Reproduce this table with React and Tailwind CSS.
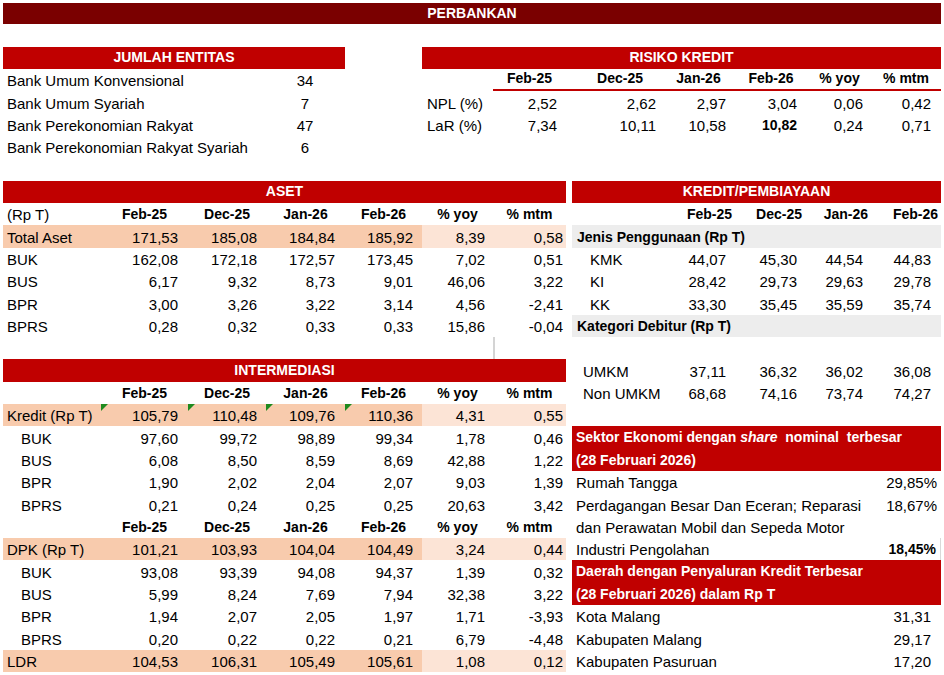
import React from "react";

const RH = "h-[22.33px]";
const ASET_COLS = "grid grid-cols-[98px_87px_78px_79px_77px_71px_73px] h-[22.33px]";
const KRED_COLS = "grid grid-cols-[100px_68px_66px_67px_68px] h-[22.33px]";
const RISK_COLS = "grid grid-cols-[71px_73px_102px_61px_84px_53px_75px] h-[22.33px]";

const ASET_PADS = ["pr-[10px]", "pr-[9px]", "pr-[10px]", "pr-[9px]", "pr-[8px]", "pr-[3px]"];
const KRED_VPADS = ["pr-[14px]", "pr-[9px]", "pr-[10px]", "pr-[10px]"];
const KRED_HPADS = ["pr-[8px]", "pr-[4px]", "pr-[5px]", "pr-[3px]"];
const RISK_VPADS = ["pr-[9px]", "pr-[12px]", "pr-[3px]", "pr-[16px]", "pr-[3px]", "pr-[10px]"];

const DARK = "bg-[#F8CBAD]";
const LIGHT = "bg-[#FCE4D6]";

function Cell({ className = "", children }) {
  return <div className={"flex items-end pb-[2px] leading-[17px] whitespace-nowrap " + className}>{children}</div>;
}

function RedBar({ children, className = "" }) {
  return (
    <div className={"flex items-center justify-center bg-[#C00000] text-white font-bold text-[14px] leading-[17px] " + RH + " " + className}>
      {children}
    </div>
  );
}

function Tri() {
  return (
    <svg className="absolute left-0 top-0" width="7" height="7" viewBox="0 0 7 7">
      <polygon points="0,0 7,0 0,7" fill="#1f8a1f" />
    </svg>
  );
}

function AsetHeader({ first = "" }) {
  const hs = ["Feb-25", "Dec-25", "Jan-26", "Feb-26", "% yoy", "% mtm"];
  return (
    <div className={ASET_COLS}>
      <Cell className="pl-[4px]">{first}</Cell>
      {hs.map((h) => (
        <Cell key={h} className="justify-center font-bold text-[14px]">{h}</Cell>
      ))}
    </div>
  );
}

function AsetRow({ label, vals, indent = false, hl = false, tri = false }) {
  return (
    <div className={ASET_COLS}>
      <Cell className={(indent ? "pl-[18px] " : "pl-[4px] ") + (hl ? DARK : "")}>{label}</Cell>
      {vals.map((v, i) => (
        <Cell
          key={i}
          className={"relative justify-end " + ASET_PADS[i] + " " + (hl ? (i < 4 ? DARK : LIGHT) : "")}
        >
          {tri && i < 4 ? <Tri /> : null}
          {v}
        </Cell>
      ))}
    </div>
  );
}

function KredRow({ label, vals, pl }) {
  return (
    <div className={KRED_COLS}>
      <Cell className={pl}>{label}</Cell>
      {vals.map((v, i) => (
        <Cell key={i} className={"justify-end " + KRED_VPADS[i]}>{v}</Cell>
      ))}
    </div>
  );
}

function RiskRow({ label, vals, boldIdx = -1 }) {
  return (
    <div className={RISK_COLS}>
      <Cell className="pl-[5px]">{label}</Cell>
      {vals.map((v, i) => (
        <Cell key={i} className={"justify-end " + RISK_VPADS[i] + (i === boldIdx ? " font-bold text-[14px]" : "")}>{v}</Cell>
      ))}
    </div>
  );
}

function Empty() {
  return <div className={RH} />;
}

export default function App() {
  return (
    <div className="w-[944px] h-[675px] bg-white text-black text-[15px] font-['Liberation_Sans',Arial,sans-serif] pt-[2px] pl-[3px] overflow-hidden">
      {/* Title */}
      <div className={RH + " w-[938px] pt-[1px]"}>
        <div className="h-full bg-[#7A0000] text-white font-bold text-[14px] flex items-center justify-center leading-[17px]">
          PERBANKAN
        </div>
      </div>
      <Empty />

      {/* Top section */}
      <div className="flex">
        <div className="w-[342px]">
          <RedBar>JUMLAH ENTITAS</RedBar>
          {[
            ["Bank Umum Konvensional", "34"],
            ["Bank Umum Syariah", "7"],
            ["Bank Perekonomian Rakyat", "47"],
            ["Bank Perekonomian Rakyat Syariah", "6"],
          ].map(([l, v]) => (
            <div key={l} className={"grid grid-cols-[262px_80px] " + RH}>
              <Cell className="pl-[4px]">{l}</Cell>
              <Cell className="justify-center">{v}</Cell>
            </div>
          ))}
        </div>
        <div className="w-[77px]" />
        <div className="w-[519px]">
          <RedBar>RISIKO KREDIT</RedBar>
          <div className={RISK_COLS}>
            <Cell />
            <Cell className="justify-center font-bold text-[14px] border-b-2 border-[#C00000]">Feb-25</Cell>
            <Cell className="justify-center font-bold text-[14px] border-b-2 border-[#C00000] pl-[6px]">Dec-25</Cell>
            <Cell className="justify-center font-bold text-[14px] border-b-2 border-[#C00000]">Jan-26</Cell>
            <Cell className="justify-center font-bold text-[14px] border-b-2 border-[#C00000]">Feb-26</Cell>
            <Cell className="justify-center font-bold text-[14px] border-b-2 border-[#C00000]">% yoy</Cell>
            <Cell className="justify-center font-bold text-[14px] border-b-2 border-[#C00000] pl-[5px]">% mtm</Cell>
          </div>
          <RiskRow label="NPL (%)" vals={["2,52", "2,62", "2,97", "3,04", "0,06", "0,42"]} />
          <RiskRow label="LaR (%)" vals={["7,34", "10,11", "10,58", "10,82", "0,24", "0,71"]} boldIdx={3} />
        </div>
      </div>
      <Empty />

      {/* Bottom section */}
      <div className="flex">
        <div className="w-[563px]">
          <RedBar>ASET</RedBar>
          <AsetHeader first="(Rp T)" />
          <AsetRow label="Total Aset" hl vals={["171,53", "185,08", "184,84", "185,92", "8,39", "0,58"]} />
          <AsetRow label="BUK" vals={["162,08", "172,18", "172,57", "173,45", "7,02", "0,51"]} />
          <AsetRow label="BUS" vals={["6,17", "9,32", "8,73", "9,01", "46,06", "3,22"]} />
          <AsetRow label="BPR" vals={["3,00", "3,26", "3,22", "3,14", "4,56", "-2,41"]} />
          <AsetRow label="BPRS" vals={["0,28", "0,32", "0,33", "0,33", "15,86", "-0,04"]} />
          <div className={ASET_COLS}>
            <div /><div /><div /><div /><div /><div />
            <div className="border-l-2 border-[#d4d4d4]" />
          </div>
          <RedBar>INTERMEDIASI</RedBar>
          <AsetHeader />
          <AsetRow label="Kredit (Rp T)" hl tri vals={["105,79", "110,48", "109,76", "110,36", "4,31", "0,55"]} />
          <AsetRow label="BUK" indent vals={["97,60", "99,72", "98,89", "99,34", "1,78", "0,46"]} />
          <AsetRow label="BUS" indent vals={["6,08", "8,50", "8,59", "8,69", "42,88", "1,22"]} />
          <AsetRow label="BPR" indent vals={["1,90", "2,02", "2,04", "2,07", "9,03", "1,39"]} />
          <AsetRow label="BPRS" indent vals={["0,21", "0,24", "0,25", "0,25", "20,63", "3,42"]} />
          <AsetHeader />
          <AsetRow label="DPK (Rp T)" hl vals={["101,21", "103,93", "104,04", "104,49", "3,24", "0,44"]} />
          <AsetRow label="BUK" indent vals={["93,08", "93,39", "94,08", "94,37", "1,39", "0,32"]} />
          <AsetRow label="BUS" indent vals={["5,99", "8,24", "7,69", "7,94", "32,38", "3,22"]} />
          <AsetRow label="BPR" indent vals={["1,94", "2,07", "2,05", "1,97", "1,71", "-3,93"]} />
          <AsetRow label="BPRS" indent vals={["0,20", "0,22", "0,22", "0,21", "6,79", "-4,48"]} />
          <AsetRow label="LDR" hl vals={["104,53", "106,31", "105,49", "105,61", "1,08", "0,12"]} />
        </div>
        <div className="w-[6px]" />
        <div className="w-[369px]">
          <RedBar>KREDIT/PEMBIAYAAN</RedBar>
          <div className={KRED_COLS}>
            <Cell />
            {["Feb-25", "Dec-25", "Jan-26", "Feb-26"].map((h, i) => (
              <Cell key={h} className={"justify-end font-bold text-[14px] " + KRED_HPADS[i]}>{h}</Cell>
            ))}
          </div>
          <div className={RH + " bg-[#EDEDED]"}>
            <Cell className="h-full pl-[5px] font-bold text-[14px]">Jenis Penggunaan (Rp T)</Cell>
          </div>
          <KredRow label="KMK" pl="pl-[18px]" vals={["44,07", "45,30", "44,54", "44,83"]} />
          <KredRow label="KI" pl="pl-[18px]" vals={["28,42", "29,73", "29,63", "29,78"]} />
          <KredRow label="KK" pl="pl-[18px]" vals={["33,30", "35,45", "35,59", "35,74"]} />
          <div className={RH + " bg-[#EDEDED]"}>
            <Cell className="h-full pl-[5px] font-bold text-[14px]">Kategori Debitur (Rp T)</Cell>
          </div>
          <Empty />
          <KredRow label="UMKM" pl="pl-[11px]" vals={["37,11", "36,32", "36,02", "36,08"]} />
          <KredRow label="Non UMKM" pl="pl-[11px]" vals={["68,68", "74,16", "73,74", "74,27"]} />
          <Empty />
          <div className="h-[44.66px] bg-[#C00000] text-white font-bold text-[14px] leading-[22.33px] pl-[4px]">
            <div className="whitespace-pre">Sektor Ekonomi dengan <i>share</i>  nominal  terbesar</div>
            <div>(28 Februari 2026)</div>
          </div>
          {[
            ["Rumah Tangga", "29,85%", false],
            ["Perdagangan Besar Dan Eceran; Reparasi", "18,67%", false],
            ["dan Perawatan Mobil dan Sepeda Motor", "", false],
            ["Industri Pengolahan", "18,45%", true],
          ].map(([l, v, b]) => (
            <div key={l} className={"flex justify-between " + RH}>
              <Cell className="pl-[4px]">{l}</Cell>
              <Cell className={"pr-[4px] " + (b ? "font-bold text-[14px] border-r border-[#d9d9d9] pr-[2px]" : "")}>{v}</Cell>
            </div>
          ))}
          <div className="h-[44.66px] bg-[#C00000] text-white font-bold text-[14px] leading-[22.33px] pl-[4px]">
            <div>Daerah dengan Penyaluran Kredit Terbesar</div>
            <div>(28 Februari 2026) dalam Rp T</div>
          </div>
          {[
            ["Kota Malang", "31,31"],
            ["Kabupaten Malang", "29,17"],
            ["Kabupaten Pasuruan", "17,20"],
          ].map(([l, v]) => (
            <div key={l} className={"flex justify-between " + RH}>
              <Cell className="pl-[4px]">{l}</Cell>
              <Cell className="pr-[10px]">{v}</Cell>
            </div>
          ))}
        </div>
      </div>
    </div>
  );
}
